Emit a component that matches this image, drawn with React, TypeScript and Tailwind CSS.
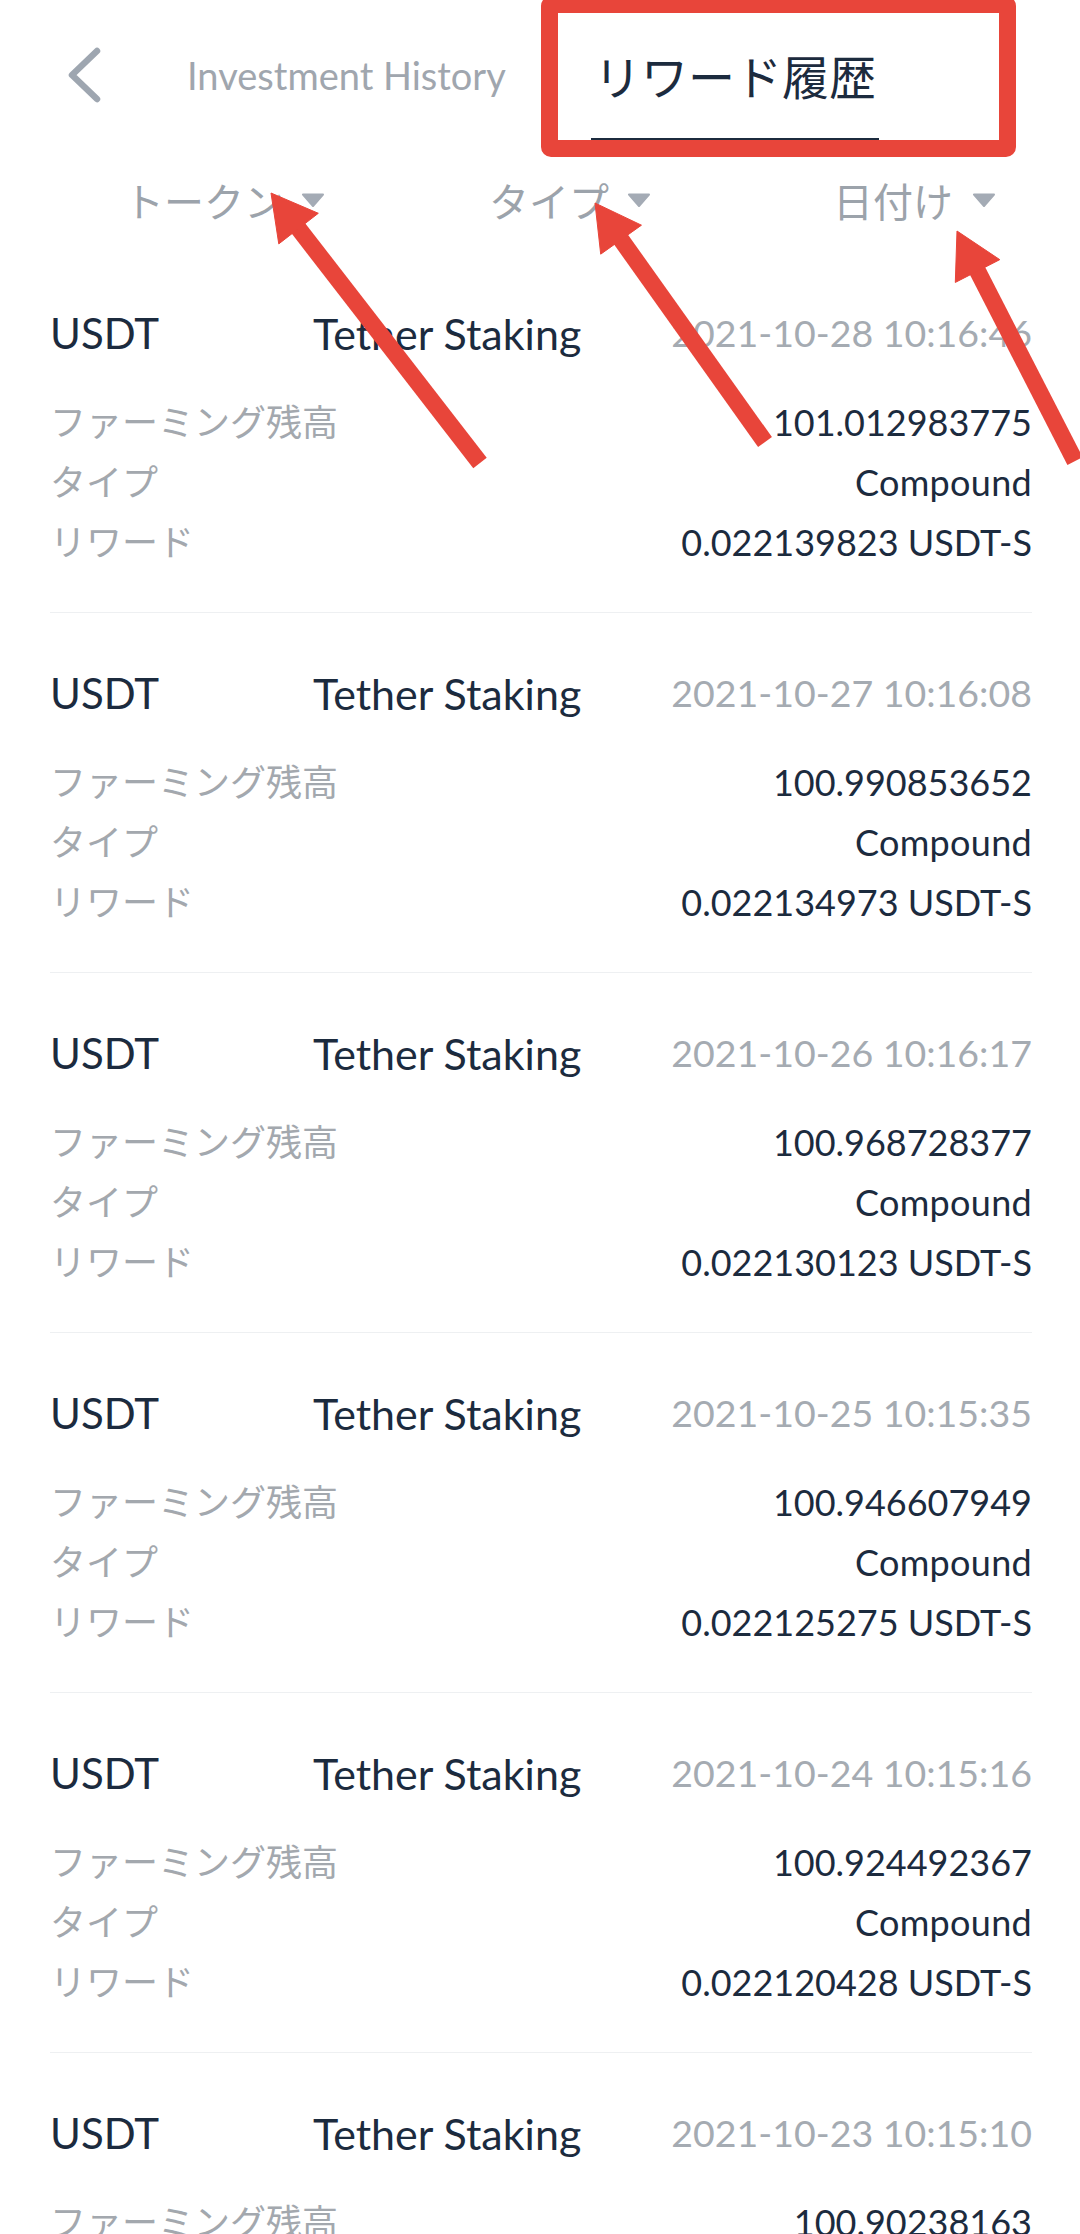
import React from 'react';

const records = [
  { date: '2021-10-28 10:16:46', balance: '101.012983775', reward: '0.022139823 USDT-S' },
  { date: '2021-10-27 10:16:08', balance: '100.990853652', reward: '0.022134973 USDT-S' },
  { date: '2021-10-26 10:16:17', balance: '100.968728377', reward: '0.022130123 USDT-S' },
  { date: '2021-10-25 10:15:35', balance: '100.946607949', reward: '0.022125275 USDT-S' },
  { date: '2021-10-24 10:15:16', balance: '100.924492367', reward: '0.022120428 USDT-S' },
  { date: '2021-10-23 10:15:10', balance: '100.90238163', reward: '0.022115583 USDT-S' },
];

// annotation arrows: tip -> tail
const arrows = [
  { tip: [271, 193], tail: [480, 463] },
  { tip: [595, 203], tail: [765, 442] },
  { tip: [957, 231], tail: [1075, 461] },
];

const Caret = () => (
  <svg width="24" height="14" viewBox="0 0 24 14" className="shrink-0">
    <path d="M2 1.5 H22 L12 13 Z" fill="#a4abb5" stroke="#a4abb5" strokeWidth="2" strokeLinejoin="round" />
  </svg>
);

const Arrow: React.FC<{ tip: number[]; tail: number[] }> = ({ tip, tail }) => {
  const dx = tail[0] - tip[0];
  const dy = tail[1] - tip[1];
  const len = Math.hypot(dx, dy);
  const ux = dx / len;
  const uy = dy / len;
  const nx = -uy;
  const ny = ux;
  const bx = tip[0] + ux * 45;
  const by = tip[1] + uy * 45;
  const head = `${tip[0]},${tip[1]} ${bx + nx * 25},${by + ny * 25} ${bx - nx * 25},${by - ny * 25}`;
  return (
    <g fill="#e8453a" stroke="#e8453a">
      <line x1={bx - ux * 4} y1={by - uy * 4} x2={tail[0]} y2={tail[1]} strokeWidth="17" />
      <polygon points={head} strokeWidth="1" strokeLinejoin="round" />
    </g>
  );
};

const Row: React.FC<{ date: string; balance: string; reward: string }> = ({ date, balance, reward }) => (
  <div className="ml-[50px] mr-[48px] border-b border-[#eef0f2] pt-[50px] pb-[40px]">
    <div className="flex h-[60px] items-center">
      <span className="w-[263px] text-[42px] text-[#1c2b3e]">USDT</span>
      <span className="text-[43px] text-[#1c2b3e]">Tether Staking</span>
      <span className="ml-auto text-[37.5px] text-[#a5abb2]">{date}</span>
    </div>
    <div className="mt-[29px] flex flex-col">
      <div className="flex h-[60px] items-center justify-between">
        <span className="text-[36px] text-[#a3a8ae]">ファーミング残高</span>
        <span className="text-[36px] text-[#1c2b3e]">{balance}</span>
      </div>
      <div className="flex h-[60px] items-center justify-between">
        <span className="text-[36px] text-[#a3a8ae]">タイプ</span>
        <span className="text-[36px] tracking-[0.3px] text-[#1c2b3e]">Compound</span>
      </div>
      <div className="flex h-[60px] items-center justify-between">
        <span className="text-[36px] text-[#a3a8ae]">リワード</span>
        <span className="text-[36px] text-[#1c2b3e]">{reward}</span>
      </div>
    </div>
  </div>
);

export default function App() {
  return (
    <div
      className="relative w-[1080px] min-h-[2234px] overflow-hidden bg-white leading-none"
      style={{ fontFamily: "Lato, 'Noto Sans CJK JP', sans-serif" }}
    >
      {/* top nav */}
      <div className="flex h-[150px] items-center">
        <svg width="36" height="56" viewBox="0 0 36 56" className="ml-[66px] shrink-0">
          <path d="M31 4 L6 28 L31 52" fill="none" stroke="#9ea6b0" strokeWidth="6.5" strokeLinecap="round" strokeLinejoin="round" />
        </svg>
        <div className="ml-[85px] w-[404px] text-[38px] text-[#a0a6ae]">Investment History</div>
        <div className="relative flex h-full w-[288px] items-center justify-center pb-[2px]">
          <span className="text-[47px] text-[#1c2b3e]" style={{ fontFamily: "'Noto Sans CJK JP', sans-serif" }}>
            リワード履歴
          </span>
          <span className="absolute bottom-[8px] left-0 h-[4px] w-full bg-[#1c2b3e]" />
        </div>
      </div>

      {/* filters */}
      <div className="flex h-[103px] items-center pb-[4px] text-[40px] text-[#9ca3ab]" style={{ fontFamily: "'Noto Sans CJK JP', sans-serif" }}>
        <div className="ml-[124px] flex w-[365px] items-center gap-[17px]">
          <span>トークン</span>
          <Caret />
        </div>
        <div className="flex w-[344px] items-center gap-[18px]">
          <span>タイプ</span>
          <Caret />
        </div>
        <div className="flex items-center gap-[19px]">
          <span>日付け</span>
          <Caret />
        </div>
      </div>

      {/* list */}
      <div className="flex flex-col">
        {records.map((r) => (
          <Row key={r.date} {...r} />
        ))}
      </div>

      {/* red annotation box */}
      <div className="pointer-events-none absolute left-[541px] top-[-4px] h-[161px] w-[475px] rounded-[10px] border-[17px] border-[#e8453a]" />

      {/* red annotation arrows */}
      <svg className="pointer-events-none absolute left-0 top-0" width="1080" height="520" viewBox="0 0 1080 520">
        {arrows.map((a, i) => (
          <Arrow key={i} tip={a.tip} tail={a.tail} />
        ))}
      </svg>
    </div>
  );
}
